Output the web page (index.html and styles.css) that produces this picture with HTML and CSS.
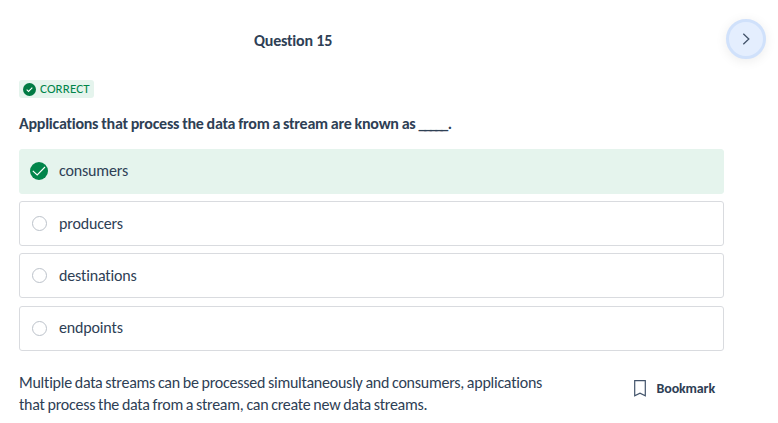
FILE: index.html
```html
<!DOCTYPE html>
<html lang="en">
<head>
<meta charset="utf-8">
<title>Question 15</title>
<link rel="stylesheet" href="styles.css">
</head>
<body>
<header class="topbar">
  <h1 class="title">Question 15</h1>
  <button class="next" aria-label="Next question"><svg width="16" height="16" viewBox="0 0 16 16"><path d="M5.3 2.8 10.8 8 5.3 13.2" fill="none" stroke="#43546b" stroke-width="1.3"/></svg></button>
</header>
<main class="quiz">
  <div class="badge"><svg width="13" height="13" viewBox="0 0 12 12"><circle cx="6" cy="6" r="6" fill="#007a43"/><path d="m3.4 6.2 1.7 1.6 3.5-3.5" fill="none" stroke="#fff" stroke-width="1"/></svg><span>CORRECT</span></div>
  <h2 class="prompt">Applications that process the data from a stream are known as <span class="blank">_____</span>.</h2>
  <ul class="options">
    <li class="option correct"><svg class="check" width="18" height="18" viewBox="0 0 18 18"><circle cx="9" cy="9" r="9" fill="#00854a"/><path d="m2.8 8.8 4.4 4.2 7.8-8" fill="none" stroke="#fff" stroke-width="1.1"/></svg><span>consumers</span></li>
    <li class="option"><i class="radio"></i><span>producers</span></li>
    <li class="option"><i class="radio"></i><span>destinations</span></li>
    <li class="option"><i class="radio"></i><span>endpoints</span></li>
  </ul>
  <footer class="footer">
    <p class="explanation">Multiple data streams can be processed simultaneously and consumers, applications that process the data from a stream, can create new data streams.</p>
    <button class="bookmark"><svg width="12" height="17" viewBox="0 0 12 17"><path d="M.7.7h10.6v15L6 13.2.7 15.7Z" fill="none" stroke="#43546b" stroke-width="1.2"/></svg><span>Bookmark</span></button>
  </footer>
</main>
</body>
</html>
```
FILE: styles.css
```css
* { box-sizing: border-box; margin: 0; padding: 0; }
body { background: #fff; color: #2e4055; font: 16px/22px Carlito, Lato, sans-serif; font-variant-ligatures: none; }
button { border: 0; background: none; font: inherit; color: inherit; }
.topbar { display: flex; align-items: center; justify-content: space-between; height: 78px; padding: 0 12px 0 254px; }
.title { font-size: 16px; line-height: 22px; padding-top: 3px; letter-spacing: -.2px; }
.next { display: grid; place-items: center; width: 40px; height: 40px; border-radius: 50%; background: #e4eefe; border: 3px solid #d0e1fb; box-shadow: 0 2px 12px rgba(0, 0, 0, .08); }
.quiz { width: 724px; padding: 2px 0 0 19px; }
.badge { display: flex; align-items: center; gap: 4px; width: 75px; height: 18px; padding-left: 4px; border-radius: 3px; background: #e5f4ed; color: #00854a; font-size: 13px; letter-spacing: .1px; }
.prompt { margin-top: 15px; font-size: 16px; line-height: 22px; letter-spacing: -.24px; word-spacing: -.4px; }
.blank { letter-spacing: -2.5px; margin-right: 2px; }
.options { display: grid; gap: 7.2px; margin-top: 14px; list-style: none; }
.option { display: flex; align-items: center; height: 45px; padding-left: 12px; gap: 12px; border: 1px solid #d9dbdf; border-radius: 3px; letter-spacing: -.16px; }
.correct { padding: 0 0 1px 10px; gap: 11px; background: #e5f4ed; border-color: #e5f4ed; }
.option:last-child { margin-top: .4px; }
.radio { width: 15px; height: 15px; border: 1px solid #bcc2ca; border-radius: 50%; }
.footer { display: flex; justify-content: space-between; margin-top: 21px; }
.explanation { width: 540px; letter-spacing: -.24px; word-spacing: -.55px; }
.bookmark { display: flex; align-items: center; gap: 11px; height: 34px; padding-right: 9px; font-size: 14px; font-weight: 700; letter-spacing: -.15px; }
```
